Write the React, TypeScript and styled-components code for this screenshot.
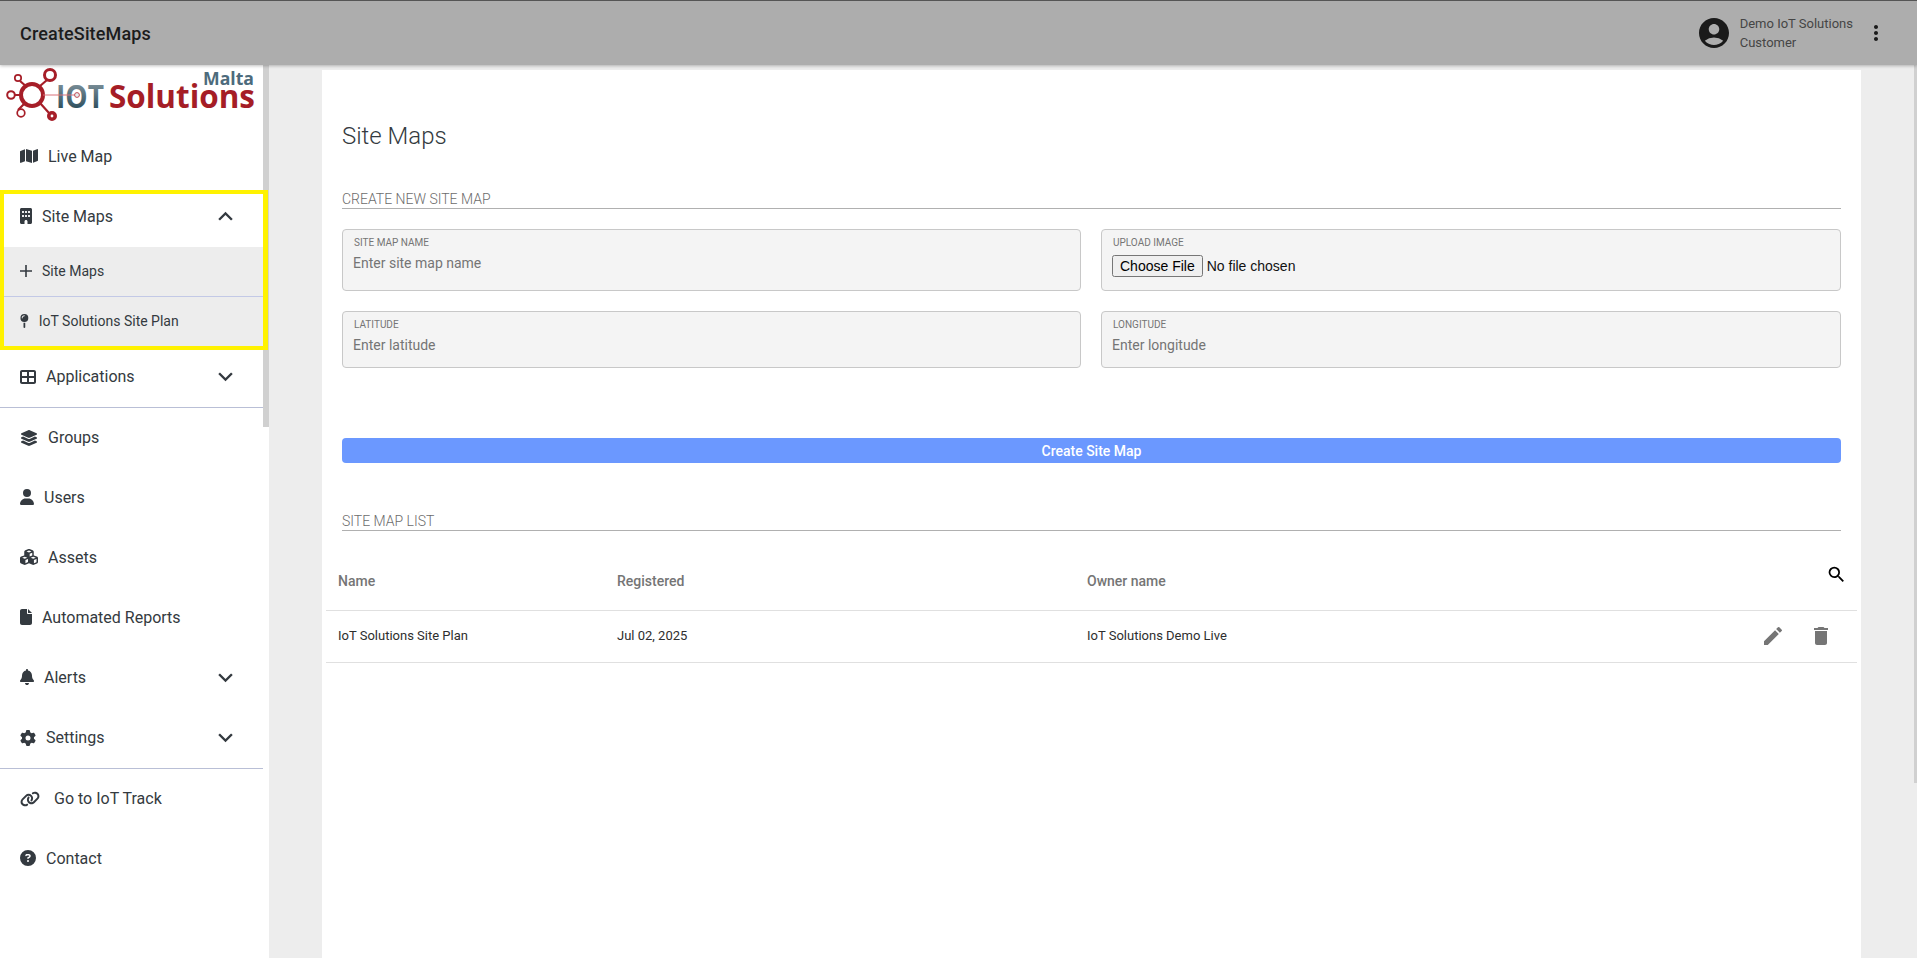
import * as React from 'react';
import styled, { createGlobalStyle } from 'styled-components';
import {
    FaMap, FaBuilding, FaTableCellsLarge, FaLayerGroup, FaUser, FaCubes, FaFile,
    FaBell, FaGear, FaLink, FaCircleQuestion, FaMapPin,
} from 'react-icons/fa6';
import {
    MdAccountCircle, MdMoreVert, MdKeyboardArrowDown, MdKeyboardArrowUp, MdSearch, MdEdit, MdDelete,
} from 'react-icons/md';

const GlobalStyle = createGlobalStyle`
    html, body {
        margin: 0;
        height: 100%;
        overflow: hidden;
        background: #ededed;
        font-family: Roboto, "Liberation Sans", sans-serif;
    }
    * { box-sizing: border-box; }
`;

const Page = styled.div`
    position: relative;
    display: grid;
    grid-template-columns: 269px 1fr;
    grid-template-rows: 65px 1fr;
    height: 958px;
    overflow: hidden;
`;

const TopBar = styled.header`
    grid-column: 1 / 3;
    z-index: 3;
    display: flex;
    align-items: center;
    justify-content: space-between;
    padding: 0 29px 0 20px;
    background: #adadad;
    border-top: 1px solid #555;
    box-shadow: 0 1px 3px rgba(0, 0, 0, 0.25);
`;

const PageTitle = styled.div`
    font-size: 18px;
    font-weight: 500;
    letter-spacing: 0.15px;
    color: #1c1c1c;
`;

const UserArea = styled.div`
    display: flex;
    align-items: center;
    color: #1a1a1a;
`;

const UserText = styled.div`
    margin: 0 11px 0 8px;
    font-size: 13px;
    line-height: 19px;
    color: #454545;
`;

const Sidebar = styled.aside`
    position: relative;
    background: #fff;
    color: #343a40;
`;

const ScrollThumb = styled.div`
    position: absolute;
    top: 0;
    left: 263px;
    width: 6px;
    height: 362px;
    background: #d0d0d0;
`;

const LogoBlock = styled.div`
    display: flex;
    height: 61px;
    width: 263px;
    padding: 2px 0 0 4px;
`;

const NavRow = styled.div<{ $divider?: boolean; $lift?: number; $extra?: number }>`
    display: flex;
    align-items: center;
    width: 263px;
    height: ${p => 60 + (p.$extra || 0)}px;
    padding: 0 23px ${p => p.$lift || 0}px 20px;
    font-size: 16px;
    border-bottom: ${p => (p.$divider ? '1px solid #b9bfd6' : 'none')};
`;

const NavIcon = styled.span<{ $w: number; $h?: number; $gap?: number }>`
    display: flex;
    flex: none;
    margin-right: ${p => p.$gap ?? 10}px;
    svg {
        width: ${p => p.$w}px;
        height: ${p => p.$h ?? 16}px;
    }
`;

const Chevron = styled.span`
    display: flex;
    margin-left: auto;
    font-size: 29px;
`;

const HighlightBox = styled.div`
    position: relative;
    z-index: 2;
    width: 268px;
    margin-top: 4px;
    border: solid #fff200;
    border-width: 4px 5px 4px 4px;
    background: #fff;
`;

const BoxHeader = styled.div`
    display: flex;
    align-items: center;
    height: 53px;
    padding: 0 23px 9px 16px;
    font-size: 16px;
`;

const SubRow = styled.div<{ $divider?: boolean }>`
    display: flex;
    align-items: center;
    height: ${p => (p.$divider ? 50 : 49)}px;
    padding: 0 0 1px 16px;
    background: #ededed;
    font-size: 14px;
    border-bottom: ${p => (p.$divider ? '1px solid #c3c9e6' : 'none')};
`;

const Main = styled.main`
    padding: 5px 56px 0 53px;
    overflow: hidden;
`;

const Panel = styled.section`
    height: 100%;
    background: #fff;
    padding: 0 4px;
`;

const Heading = styled.h1`
    margin: 0;
    padding: 51px 0 0 16px;
    font-size: 24px;
    font-weight: 300;
    line-height: 30px;
    color: #343a40;
`;

const SectionTitle = styled.div<{ $top: number }>`
    margin: ${p => p.$top}px 16px 0;
    height: 20px;
    line-height: 20px;
    font-size: 14px;
    font-weight: 300;
    color: #6c6c6c;
    border-bottom: 1px solid #b0b0b0;
`;

const FormGrid = styled.div`
    display: grid;
    grid-template-columns: 739px 1fr;
    grid-template-rows: 62px 57px;
    gap: 20px;
    margin: 20px 16px 0;
`;

const Field = styled.label`
    display: block;
    padding: 7px 11px 0;
    background: #f4f4f4;
    border: 1px solid #c8c8c8;
    border-radius: 4px;
`;

const FieldLabel = styled.div`
    font-size: 10px;
    line-height: 12px;
    color: #757575;
    text-transform: uppercase;
`;

const TextInput = styled.input`
    display: block;
    width: 100%;
    margin: 4px 0 0 -1px;
    padding: 0;
    height: 20px;
    border: 0;
    outline: 0;
    background: transparent;
    font-family: Roboto, sans-serif;
    font-size: 14px;
    color: #333;
    &::placeholder { color: #757575; opacity: 1; }
`;

const FileInput = styled.input`
    display: block;
    margin: 6px 0 0 -1px;
    font-family: "Liberation Sans", Arial, sans-serif;
    font-size: 14px;
    color: #111;
`;

const CreateButton = styled.button`
    display: block;
    width: calc(100% - 32px);
    height: 25px;
    margin: 70px 16px 0;
    padding: 0;
    border: 0;
    border-radius: 4px;
    background: #6b98ff;
    color: #fff;
    font-family: Roboto, sans-serif;
    font-size: 14px;
    font-weight: 500;
`;

const Table = styled.div`
    margin-top: 19px;
`;

const TableRow = styled.div<{ $height: number }>`
    display: grid;
    grid-template-columns: 279px 470px 1fr 110px;
    align-items: center;
    height: ${p => p.$height}px;
    padding-left: 12px;
    border-bottom: 1px solid #e0e0e0;
`;

const HeadCell = styled.div`
    padding-top: 2px;
    font-size: 14px;
    color: #757575;
    font-weight: 500;
`;

const Cell = styled.div`
    padding-bottom: 2px;
    font-size: 13px;
    color: #2e2e2e;
`;

const SearchCell = styled.div`
    display: flex;
    justify-content: flex-end;
    padding: 0 10px 11px 0;
    font-size: 21px;
    color: #000;
`;

const ActionCell = styled.div`
    display: flex;
    justify-content: flex-end;
    gap: 24px;
    padding: 0 24px 2px 0;
    font-size: 24px;
    color: #757575;
`;

const PageScrollThumb = styled.div`
    position: absolute;
    top: 65px;
    right: 0;
    width: 3px;
    height: 718px;
    background: #d0d0d0;
`;

const PlusIcon = () => (
    <svg viewBox="0 0 12 12" fill="currentColor">
        <path d="M5.2 0h1.6v5.2H12v1.6H6.8V12H5.2V6.8H0V5.2h5.2z" />
    </svg>
);

const Logo = () => (
    <svg width="255" height="58" viewBox="0 0 255 58" style={{ overflow: 'visible' }}>
        <defs>
            <linearGradient id="iot" x1="0" y1="0" x2="0" y2="1">
                <stop offset="0" stopColor="#9aa8b0" />
                <stop offset="1" stopColor="#123848" />
            </linearGradient>
        </defs>
        <g fill="none" stroke="#a61e28">
            <path strokeWidth="2.2" d="M16 14 23 20M10 28h8M14 43 21 36M36 19 43 13M36 36 45 46" />
            <circle cx="28" cy="28" r="11" strokeWidth="4" />
            <circle cx="46" cy="8" r="5.5" strokeWidth="3" />
            <circle cx="14" cy="11" r="3.2" strokeWidth="1.7" />
            <circle cx="7" cy="28" r="3.8" strokeWidth="2" />
            <circle cx="17" cy="46" r="3.8" strokeWidth="1.7" />
            <circle cx="48" cy="49" r="3.2" strokeWidth="3.6" />
        </g>
        <text x="52" y="41" fontFamily="'Open Sans', sans-serif" fontWeight="700" fontSize="33" fill="url(#iot)" textLength="48" lengthAdjust="spacingAndGlyphs">IOT</text>
        <path d="M39 28h32" stroke="#d9707a" strokeWidth="1" />
        <circle cx="73" cy="28" r="2.4" fill="#e8eef0" stroke="#c04b55" strokeWidth="1" />
        <text x="105" y="41" fontFamily="'Open Sans', sans-serif" fontWeight="700" fontSize="33" fill="#a51d26" textLength="146" lengthAdjust="spacingAndGlyphs">Solutions</text>
        <text x="199" y="18" fontFamily="'Open Sans', sans-serif" fontWeight="700" fontSize="17" fill="#4d6b7c" textLength="51" lengthAdjust="spacingAndGlyphs">Malta</text>
    </svg>
);

export default function App() {
    return (
        <Page>
            <GlobalStyle />
            <TopBar>
                <PageTitle>CreateSiteMaps</PageTitle>
                <UserArea>
                    <MdAccountCircle size={36} />
                    <UserText>
                        <div>Demo IoT Solutions</div>
                        <div>Customer</div>
                    </UserText>
                    <MdMoreVert size={24} />
                </UserArea>
            </TopBar>
            <Sidebar>
                <ScrollThumb />
                <LogoBlock><Logo /></LogoBlock>
                <NavRow><NavIcon $w={18}><FaMap /></NavIcon>Live Map</NavRow>
                <HighlightBox>
                    <BoxHeader>
                        <NavIcon $w={12}><FaBuilding /></NavIcon>Site Maps
                        <Chevron><MdKeyboardArrowUp /></Chevron>
                    </BoxHeader>
                    <SubRow $divider><NavIcon $w={12} $h={12}><PlusIcon /></NavIcon>Site Maps</SubRow>
                    <SubRow><NavIcon $w={8.75} $h={14}><FaMapPin /></NavIcon>IoT Solutions Site Plan</SubRow>
                </HighlightBox>
                <NavRow $divider $lift={4} $extra={-2}>
                    <NavIcon $w={16}><FaTableCellsLarge /></NavIcon>Applications
                    <Chevron><MdKeyboardArrowDown /></Chevron>
                </NavRow>
                <NavRow $extra={-1}><NavIcon $w={18}><FaLayerGroup /></NavIcon>Groups</NavRow>
                <NavRow><NavIcon $w={14}><FaUser /></NavIcon>Users</NavRow>
                <NavRow><NavIcon $w={18}><FaCubes /></NavIcon>Assets</NavRow>
                <NavRow><NavIcon $w={12}><FaFile /></NavIcon>Automated Reports</NavRow>
                <NavRow><NavIcon $w={14}><FaBell /></NavIcon>Alerts<Chevron><MdKeyboardArrowDown /></Chevron></NavRow>
                <NavRow $divider $extra={2}>
                    <NavIcon $w={16}><FaGear /></NavIcon>Settings
                    <Chevron><MdKeyboardArrowDown /></Chevron>
                </NavRow>
                <NavRow $extra={-1}><NavIcon $w={20} $gap={14}><FaLink /></NavIcon>Go to IoT Track</NavRow>
                <NavRow><NavIcon $w={16}><FaCircleQuestion /></NavIcon>Contact</NavRow>
            </Sidebar>
            <Main>
                <Panel>
                    <Heading>Site Maps</Heading>
                    <SectionTitle $top={38}>CREATE NEW SITE MAP</SectionTitle>
                    <FormGrid>
                        <Field>
                            <FieldLabel>Site map name</FieldLabel>
                            <TextInput placeholder="Enter site map name" />
                        </Field>
                        <Field>
                            <FieldLabel>Upload image</FieldLabel>
                            <FileInput type="file" />
                        </Field>
                        <Field>
                            <FieldLabel>Latitude</FieldLabel>
                            <TextInput placeholder="Enter latitude" />
                        </Field>
                        <Field>
                            <FieldLabel>Longitude</FieldLabel>
                            <TextInput placeholder="Enter longitude" />
                        </Field>
                    </FormGrid>
                    <CreateButton>Create Site Map</CreateButton>
                    <SectionTitle $top={48}>SITE MAP LIST</SectionTitle>
                    <Table>
                        <TableRow $height={61}>
                            <HeadCell>Name</HeadCell>
                            <HeadCell>Registered</HeadCell>
                            <HeadCell>Owner name</HeadCell>
                            <SearchCell><MdSearch /></SearchCell>
                        </TableRow>
                        <TableRow $height={52}>
                            <Cell>IoT Solutions Site Plan</Cell>
                            <Cell>Jul 02, 2025</Cell>
                            <Cell>IoT Solutions Demo Live</Cell>
                            <ActionCell><MdEdit /><MdDelete /></ActionCell>
                        </TableRow>
                    </Table>
                </Panel>
            </Main>
            <PageScrollThumb />
        </Page>
    );
}
